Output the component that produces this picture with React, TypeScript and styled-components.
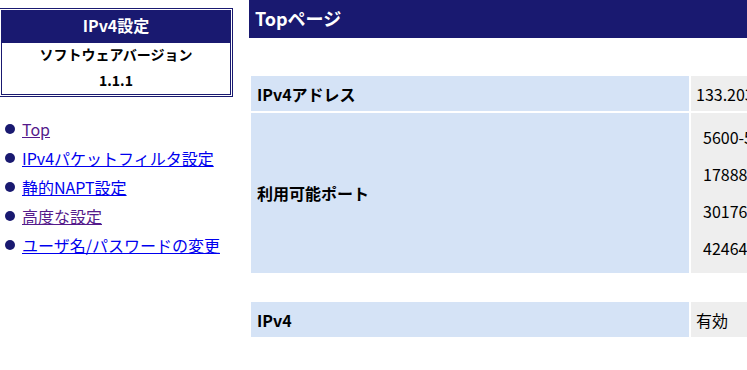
import styled, { createGlobalStyle } from "styled-components";

const GlobalStyle = createGlobalStyle`
  html, body {
    margin: 0;
    padding: 0;
    overflow: hidden;
    background: #fff;
  }
  body {
    font-family: "Noto Sans CJK JP", "DejaVu Sans", sans-serif;
    color: #000;
  }
`;

const Page = styled.div`
  display: flex;
  align-items: flex-start;
  gap: 16px;
  width: 1000px;
`;

const Side = styled.div`
  flex: 0 0 234px;
  margin-top: 8px;
  margin-left: -1px;
`;

const InfoBox = styled.div`
  border: 3px double #191970;
  text-align: center;
`;

const InfoTitle = styled.div`
  background: #191970;
  color: #fff;
  font-weight: bold;
  font-size: 16px;
  height: 32px;
  line-height: 29px;
`;

const InfoLine = styled.div`
  font-size: 14px;
  font-weight: bold;
  line-height: 26px;
`;

const InfoBody = styled.div`
  padding: 0 0 1px;
  margin-top: -2px;
`;

const Nav = styled.ul`
  list-style: none;
  margin: 17px 0 0;
  padding: 0 0 0 6px;
`;

const NavItem = styled.li`
  display: flex;
  align-items: center;
  gap: 7px;
  height: 29px;
  font-size: 16px;
`;

const Dot = styled.span`
  width: 10px;
  height: 10px;
  border-radius: 50%;
  background: #191970;
  flex: 0 0 10px;
`;

const NavLink = styled.a<{ $visited?: boolean }>`
  color: ${(p) => (p.$visited ? "#551a8b" : "#0000ee")};
  text-decoration: underline;
`;

const Main = styled.div`
  flex: 1;
`;

const PageTitle = styled.h1`
  margin: 0;
  background: #191970;
  color: #fff;
  font-size: 18px;
  font-weight: bold;
  height: 38px;
  line-height: 36px;
  padding-left: 6px;
`;

const Table = styled.table`
  border-spacing: 2px;
  margin-top: 36px;
  & + & {
    margin-top: 25px;
  }
`;

const Label = styled.th`
  width: 432px;
  background: #d5e3f6;
  text-align: left;
  font-size: 16px;
  font-weight: bold;
  padding: 0 0 0 6px;
  height: 35px;
`;

const Value = styled.td`
  width: 300px;
  background: #eeeeee;
  font-size: 16px;
  padding: 0 0 0 5px;
  white-space: nowrap;
`;

const PortList = styled.div`
  display: flex;
  flex-direction: column;
  gap: 17px;
  padding: 14px 7px 15px;
`;

const Port = styled.div`
  line-height: 20px;
`;

const links = [
  { label: "Top", visited: true },
  { label: "IPv4パケットフィルタ設定", visited: false },
  { label: "静的NAPT設定", visited: false },
  { label: "高度な設定", visited: true },
  { label: "ユーザ名/パスワードの変更", visited: false },
];

const ports = ["5600-5615", "17888-17903", "30176-30191", "42464-42479"];

export default function App() {
  return (
    <>
      <GlobalStyle />
      <Page>
        <Side>
          <InfoBox>
            <InfoTitle>IPv4設定</InfoTitle>
            <InfoBody>
              <InfoLine>ソフトウェアバージョン</InfoLine>
              <InfoLine>1.1.1</InfoLine>
            </InfoBody>
          </InfoBox>
          <Nav>
            {links.map((l) => (
              <NavItem key={l.label}>
                <Dot />
                <NavLink href="#" $visited={l.visited}>
                  {l.label}
                </NavLink>
              </NavItem>
            ))}
          </Nav>
        </Side>
        <Main>
          <PageTitle>Topページ</PageTitle>
          <Table>
            <tbody>
              <tr>
                <Label>IPv4アドレス</Label>
                <Value>133.203.112.45</Value>
              </tr>
              <tr>
                <Label>利用可能ポート</Label>
                <Value>
                  <PortList>
                    {ports.map((p) => (
                      <Port key={p}>{p}</Port>
                    ))}
                  </PortList>
                </Value>
              </tr>
            </tbody>
          </Table>
          <Table>
            <tbody>
              <tr>
                <Label>IPv4</Label>
                <Value>有効</Value>
              </tr>
            </tbody>
          </Table>
        </Main>
      </Page>
    </>
  );
}
